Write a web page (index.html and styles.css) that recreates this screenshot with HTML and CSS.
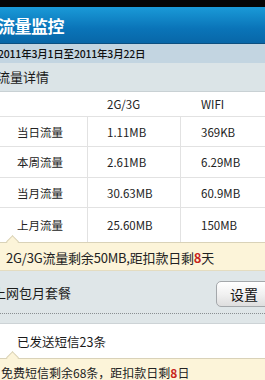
FILE: index.html
```html
<!DOCTYPE html>
<html lang="zh-CN">
<head>
<meta charset="utf-8">
<link rel="stylesheet" href="styles.css">
</head>
<body>
<div class="screen">
  <div class="statusbar"></div>
  <div class="header"><h1 class="title">流量监控</h1></div>
  <div class="period">2011年3月1日至2011年3月22日</div>
  <div class="section-title">流量详情</div>
  <div class="traffic">
    <div class="cell head"></div>
    <div class="cell head val">2G/3G</div>
    <div class="cell head val last">WIFI</div>

    <div class="cell name">当日流量</div>
    <div class="cell val">1.11MB</div>
    <div class="cell val last">369KB</div>

    <div class="cell name">本周流量</div>
    <div class="cell val">2.61MB</div>
    <div class="cell val last">6.29MB</div>

    <div class="cell name">当月流量</div>
    <div class="cell val">30.63MB</div>
    <div class="cell val last">60.9MB</div>

    <div class="cell name end">上月流量</div>
    <div class="cell val end">25.60MB</div>
    <div class="cell val last end">150MB</div>
  </div>
  <div class="notice notice-top">2G/3G流量剩余50MB,距扣款日剩<span class="hot">8</span>天</div>
  <div class="package">
    <span class="package-name">上网包月套餐</span>
    <button class="btn">设置</button>
  </div>
  <div class="gap"></div>
  <div class="sms">已发送短信23条</div>
  <div class="notice notice-bottom">免费短信剩余68条，距扣款日剩<span class="hot">8</span>日</div>
</div>
</body>
</html>
```
FILE: styles.css
```css
html, body {
  margin: 0;
  padding: 0;
}
body {
  width: 265px;
  height: 380px;
  overflow: hidden;
  background: #dfe6e8;
  font-family: "Noto Sans CJK SC", "Liberation Sans", sans-serif;
  color: #1a1a1a;
}
.screen {
  display: flex;
  flex-direction: column;
  width: 265px;
}
.statusbar {
  height: 7px;
  background: #050505;
}
.header {
  height: 36px;
  background: linear-gradient(#1a9ad8, #0a74b8 60%, #0867a8);
  border-bottom: 1px solid #0b4f80;
  display: flex;
  align-items: center;
}
.title {
  margin: 0 0 0 -2px;
  font-size: 17px;
  font-weight: bold;
  color: #fff;
  letter-spacing: -0.5px;
}
.period {
  height: 19px;
  line-height: 19px;
  background: #c3d5e1;
  font-size: 10.5px;
  font-weight: 500;
  color: #111;
  margin-left: -2px;
  letter-spacing: -0.2px;
}
.section-title {
  height: 28px;
  line-height: 28px;
  background: #dbe4e7;
  border-bottom: 1px solid #c9d1d4;
  font-size: 13px;
  margin-left: -3px;
}
.traffic {
  display: grid;
  grid-template-columns: 88px 93px 84px;
  grid-template-rows: 25px 30px 31px 30px 34px;
  background: #fff;
  font-size: 11.5px;
  color: #222;
}
.cell {
  display: flex;
  align-items: center;
  border-bottom: 1px solid #e2e2e2;
  border-right: 1px solid #e2e2e2;
}
.cell.head {
  border-right: none;
}
.cell.name {
  padding-left: 17px;
}
.cell.val {
  padding-left: 19px;
}
.cell.last {
  border-right: none;
  padding-left: 20px;
}
.cell.end {
  border-bottom: none;
}
.notice {
  position: relative;
  background: #fcf4d9;
  border-top: 1px solid #d9d2b8;
  border-bottom: 1px solid #e4dcc0;
  font-size: 13px;
  color: #222;
}
.notice::before {
  content: "";
  position: absolute;
  left: 8px;
  top: -6px;
  width: 8px;
  height: 8px;
  background: #fcf4d9;
  border-left: 1px solid #d9d2b8;
  border-top: 1px solid #d9d2b8;
  transform: rotate(45deg);
}
.notice-top {
  height: 27px;
  line-height: 30px;
  padding-left: 6px;
  letter-spacing: -0.2px;
}
.notice-bottom {
  height: 24px;
  line-height: 28px;
  font-size: 12px;
  padding-left: 1px;
  border-bottom: none;
}
.hot {
  color: #c8241c;
  font-weight: bold;
}
.package {
  height: 42px;
  display: flex;
  align-items: center;
  justify-content: space-between;
  background: #dfe6e8;
  border-bottom: 1px dotted #8a8f92;
}
.package-name {
  font-size: 13px;
  margin-left: -7px;
}
.btn {
  margin-top: 3px;
  width: 56px;
  height: 26px;
  margin-right: -7px;
  border: 1px solid #a4a8ab;
  border-radius: 5px;
  background: linear-gradient(#ffffff, #f1f1f1 50%, #dedede);
  font-family: inherit;
  font-size: 14px;
  color: #111;
  text-align: left;
  padding: 0 0 0 13px;
}
.gap {
  height: 9px;
  background: #dfe6e8;
  border-bottom: 1px solid #cdd3d6;
}
.sms {
  height: 34px;
  line-height: 36px;
  background: #fff;
  font-size: 12.5px;
  padding-left: 17px;
}
```
